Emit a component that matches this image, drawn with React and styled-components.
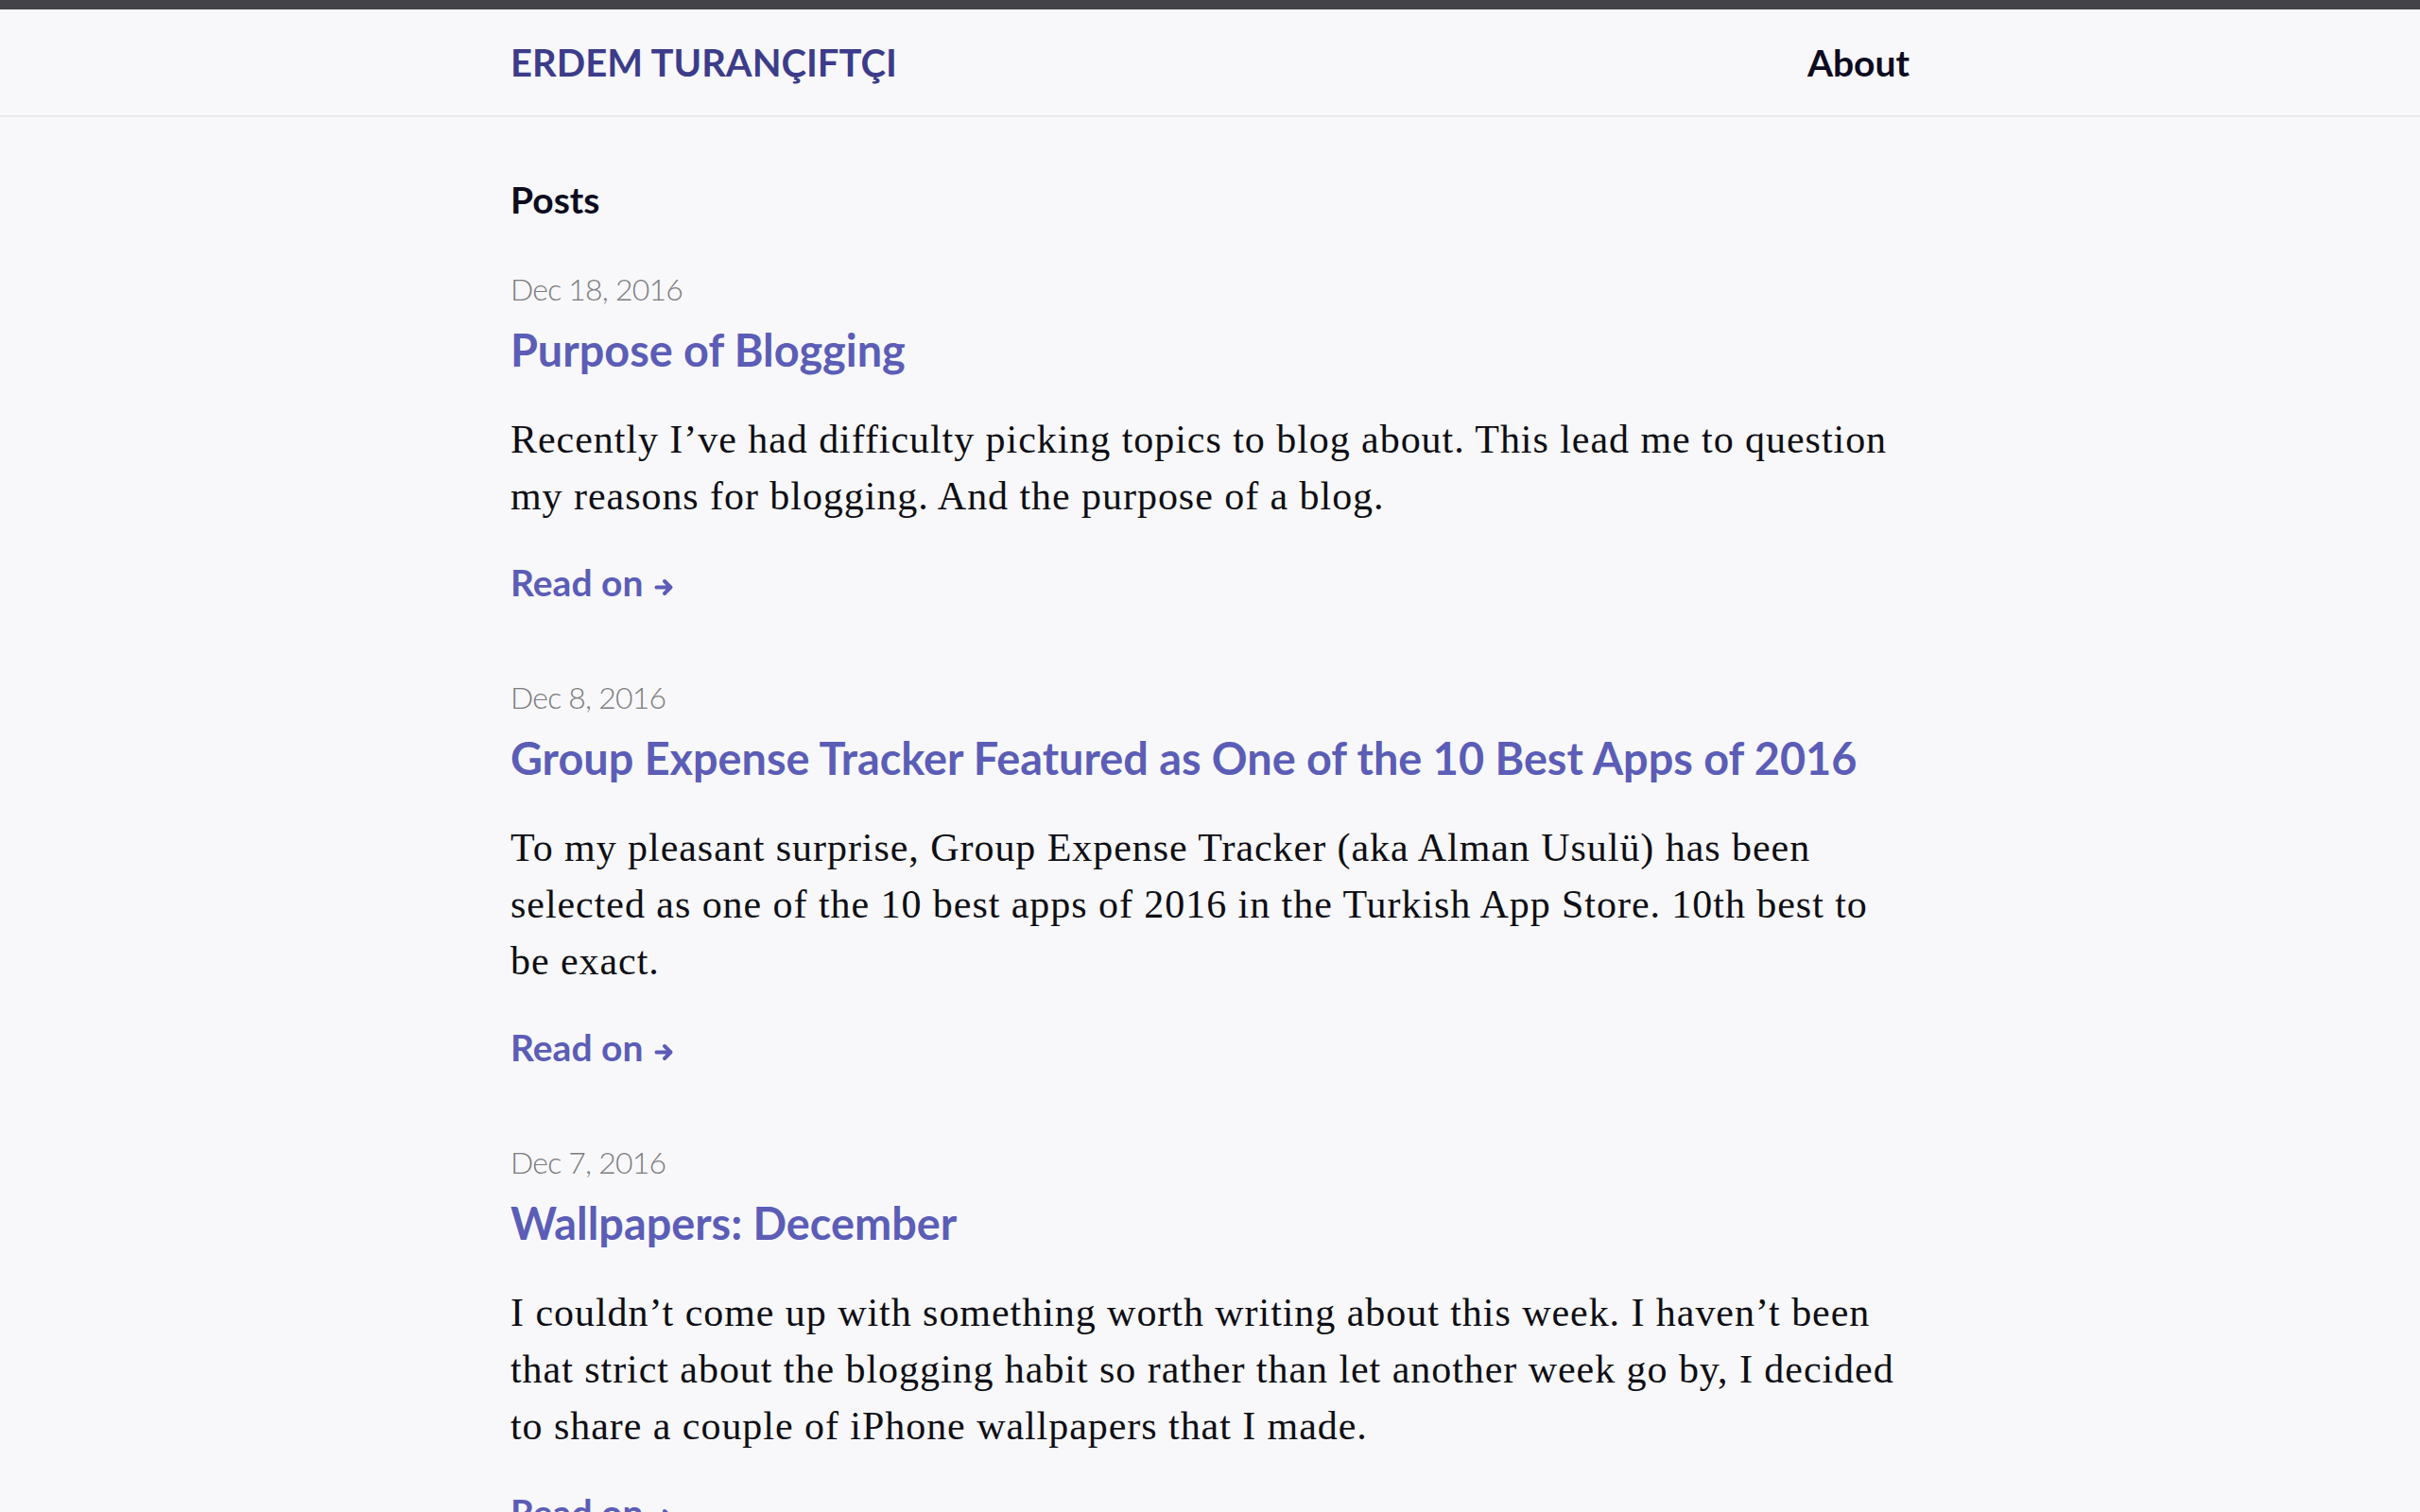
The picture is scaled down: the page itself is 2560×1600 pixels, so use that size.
import React from 'react';
import styled, { createGlobalStyle } from 'styled-components';

const GlobalStyle = createGlobalStyle`
  html, body {
    margin: 0;
    padding: 0;
    background: #f8f8fa;
  }
  body {
    border-top: 10px solid #444448;
    font-family: Lato, "Noto Sans", sans-serif;
  }
`;

const Header = styled.header`
  border-bottom: 2px solid #ebebee;
`;

const Wrap = styled.div`
  width: 1480px;
  margin: 0 auto;
`;

const HeaderInner = styled(Wrap)`
  display: flex;
  align-items: center;
  justify-content: space-between;
  height: 112px;
`;

const Logo = styled.a`
  font-size: 40px;
  font-weight: 700;
  color: #3c3c8a;
  text-decoration: none;
`;

const NavLink = styled.a`
  font-size: 39px;
  font-weight: 700;
  color: #0c0c1e;
  text-decoration: none;
`;

const Main = styled(Wrap)`
  padding-top: 63px;
`;

const PageTitle = styled.h2`
  margin: 0 0 47px;
  font-size: 39px;
  line-height: 48px;
  font-weight: 700;
  color: #0c0c1e;
`;

const Post = styled.article`
  margin-bottom: 74px;
`;

const PostDate = styled.time`
  display: block;
  font-size: 32px;
  line-height: 48px;
  font-weight: 300;
  letter-spacing: -0.8px;
  color: #7c7c80;
`;

const PostTitle = styled.h3`
  margin: 9px 0 34px;
  font-size: 46.8px;
  line-height: 62px;
  font-weight: 700;
  color: #5b5db6;
`;

// lines are kept as in the original layout so the breaks match
const Excerpt = styled.p`
  margin: 0 0 37px;
  font-family: "Liberation Serif", serif;
  font-size: 42px;
  line-height: 60px;
  letter-spacing: 0.95px;
  color: #0e0e14;
`;

const Line = styled.span`
  display: block;
  white-space: nowrap;
`;

const ReadOn = styled.a`
  display: inline-block;
  font-size: 39px;
  line-height: 48px;
  font-weight: 700;
  color: #5b5db6;
  text-decoration: none;

  svg {
    margin-left: 12px;
    vertical-align: baseline;
  }
`;

const Arrow = () => (
  <svg width="22" height="19" viewBox="0 0 22 19" fill="none">
    <path d="M2.5 9.5h15M11 3l6.5 6.5L11 16" stroke="#5b5db6" strokeWidth="4" strokeLinecap="round" strokeLinejoin="round" />
  </svg>
);

const posts = [
  {
    date: 'Dec 18, 2016',
    title: 'Purpose of Blogging',
    excerpt: [
      'Recently I’ve had difficulty picking topics to blog about. This lead me to question',
      'my reasons for blogging. And the purpose of a blog.'
    ]
  },
  {
    date: 'Dec 8, 2016',
    title: 'Group Expense Tracker Featured as One of the 10 Best Apps of 2016',
    excerpt: [
      'To my pleasant surprise, Group Expense Tracker (aka Alman Usulü) has been',
      'selected as one of the 10 best apps of 2016 in the Turkish App Store. 10th best to',
      'be exact.'
    ]
  },
  {
    date: 'Dec 7, 2016',
    title: 'Wallpapers: December',
    excerpt: [
      'I couldn’t come up with something worth writing about this week. I haven’t been',
      'that strict about the blogging habit so rather than let another week go by, I decided',
      'to share a couple of iPhone wallpapers that I made.'
    ]
  }
];

const App = () => (
  <>
    <GlobalStyle />
    <Header>
      <HeaderInner>
        <Logo href="#">ERDEM TURANÇIFTÇI</Logo>
        <NavLink href="#">About</NavLink>
      </HeaderInner>
    </Header>
    <Main>
      <PageTitle>Posts</PageTitle>
      {posts.map(post => (
        <Post key={post.title}>
          <PostDate>{post.date}</PostDate>
          <PostTitle>{post.title}</PostTitle>
          <Excerpt>
            {post.excerpt.map(line => (
              <Line key={line}>{line}</Line>
            ))}
          </Excerpt>
          <ReadOn href="#">
            Read on<Arrow />
          </ReadOn>
        </Post>
      ))}
    </Main>
  </>
);

export default App;
